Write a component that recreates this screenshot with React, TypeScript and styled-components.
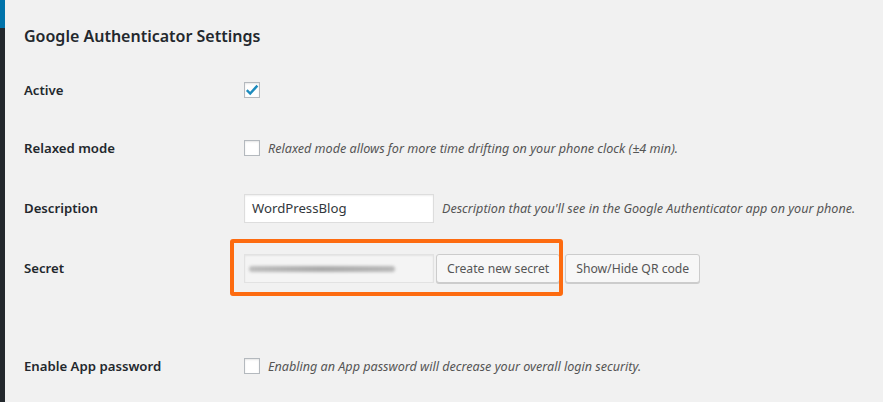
import React from "react";
import styled, { createGlobalStyle } from "styled-components";

const Global = createGlobalStyle`
  html, body { margin: 0; padding: 0; background: #f1f1f1; }
  body { font-family: "Noto Sans", "Open Sans", sans-serif; color: #23282d; }
  * { box-sizing: border-box; }
`;

const Page = styled.div`
  display: flex;
  width: 883px;
  height: 402px;
  overflow: hidden;
  background: #f1f1f1;
`;

const Sidebar = styled.div`
  width: 5px;
  flex: none;
  display: flex;
  flex-direction: column;
  background: #23282d;
`;

const SidebarActive = styled.div`
  height: 28px;
  background: #0073aa;
`;

const Content = styled.div`
  flex: 1;
  padding-left: 19px;
  display: flex;
  flex-direction: column;
`;

const Heading = styled.h2`
  margin: 0;
  padding-top: 24px;
  height: 61px;
  font-size: 16px;
  font-weight: 600;
  color: #23282d;
  line-height: 24px;
`;

const Row = styled.div<{ $h: number }>`
  display: grid;
  grid-template-columns: 220px 1fr;
  align-items: center;
  height: ${(p) => p.$h}px;
`;

const Spacer = styled.div<{ $h: number }>`
  height: ${(p) => p.$h}px;
`;

const Label = styled.div`
  font-size: 13.2px;
  font-weight: 600;
  color: #23282d;
`;

const Field = styled.div`
  position: relative;
  display: flex;
  align-items: center;
  gap: 8px;
`;

const Box = styled.span`
  width: 16px;
  height: 16px;
  flex: none;
  border: 1px solid #b4b9be;
  background: #fff;
  box-shadow: inset 0 1px 2px rgba(0, 0, 0, 0.1);
  display: flex;
  align-items: center;
  justify-content: center;
`;

const Hint = styled.span`
  font-size: 12.6px;
  font-style: italic;
  color: #555;
  white-space: nowrap;
`;

const TextInput = styled.div<{ $grey?: boolean }>`
  width: 190px;
  height: 29px;
  flex: none;
  border: 1px solid ${(p) => (p.$grey ? "#e2e2e2" : "#ddd")};
  background: ${(p) => (p.$grey ? "#f4f4f4" : "#fff")};
  box-shadow: inset 0 1px 2px rgba(0, 0, 0, 0.07);
  font-size: 13.2px;
  color: #32373c;
  padding: 0 7px;
  display: flex;
  align-items: center;
  position: relative;
`;

const Blur = styled.span`
  position: absolute;
  left: 4px;
  top: 11px;
  width: 146px;
  height: 6px;
  border-radius: 3px;
  background: linear-gradient(90deg, #bdbdbd, #a9a9a9 50%, #b8b8b8);
  filter: blur(1.5px);
`;

const Button = styled.button`
  height: 29px;
  padding: 0 10px;
  border: 1px solid #ccc;
  border-radius: 3px;
  background: #f7f7f7;
  box-shadow: 0 1px 0 #ccc;
  color: #555;
  font-family: "Noto Sans", "Open Sans", sans-serif;
  font-size: 12.2px;
  white-space: nowrap;
`;

const Highlight = styled.div`
  position: absolute;
  left: -14px;
  top: -15px;
  width: 333px;
  height: 57px;
  border: 4px solid #fd6b10;
  border-radius: 3px;
  pointer-events: none;
`;

const Buttons = styled.div`
  display: flex;
  gap: 5px;
  margin-left: -6px;
`;

const Check = () => (
  <svg width="14" height="14" viewBox="0 0 14 14">
    <path d="M1.8 7.2 L5.2 10.6 L12.4 2.6" fill="none" stroke="#1e8cbe" strokeWidth="2.4" />
  </svg>
);

export default function App() {
  return (
    <>
      <Global />
      <Page>
        <Sidebar>
          <SidebarActive />
        </Sidebar>
        <Content>
          <Heading>Google Authenticator Settings</Heading>
          <Row $h={58}>
            <Label>Active</Label>
            <Field>
              <Box>
                <Check />
              </Box>
            </Field>
          </Row>
          <Row $h={58}>
            <Label>Relaxed mode</Label>
            <Field>
              <Box />
              <Hint>Relaxed mode allows for more time drifting on your phone clock (±4 min).</Hint>
            </Field>
          </Row>
          <Row $h={62}>
            <Label>Description</Label>
            <Field>
              <TextInput>WordPressBlog</TextInput>
              <Hint>Description that you'll see in the Google Authenticator app on your phone.</Hint>
            </Field>
          </Row>
          <Row $h={58}>
            <Label>Secret</Label>
            <Field>
              <TextInput $grey>
                <Blur />
              </TextInput>
              <Buttons>
                <Button>Create new secret</Button>
                <Button>Show/Hide QR code</Button>
              </Buttons>
              <Highlight />
            </Field>
          </Row>
          <Spacer $h={40} />
          <Row $h={58}>
            <Label>Enable App password</Label>
            <Field>
              <Box />
              <Hint>Enabling an App password will decrease your overall login security.</Hint>
            </Field>
          </Row>
        </Content>
      </Page>
    </>
  );
}
